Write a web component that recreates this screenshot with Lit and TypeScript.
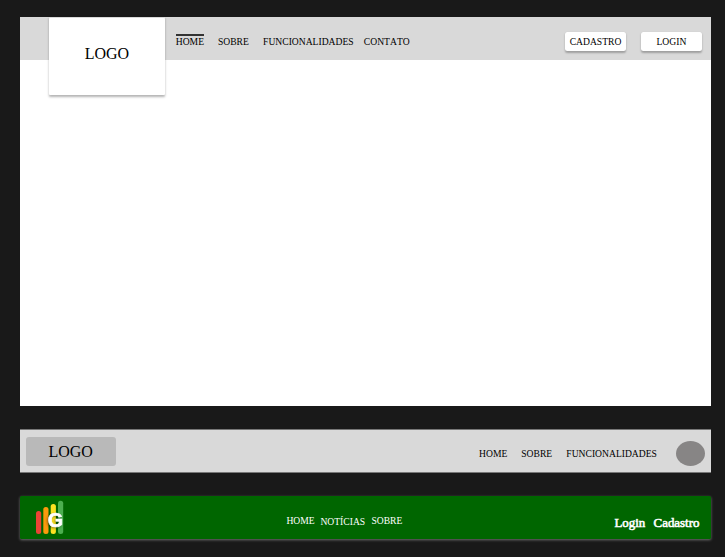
import { LitElement, html, css, svg } from "lit";
import { customElement } from "lit/decorators.js";

@customElement("brand-mark")
class BrandMark extends LitElement {
  static styles = css`
    :host { display: block; width: 28px; height: 36px; }
    svg { display: block; }
    .glyph { font: bold 21px "Liberation Sans", Arial, sans-serif; fill: #fff; stroke: #fff; stroke-width: 0.7px; filter: drop-shadow(-1px 1px 1px rgba(0, 0, 0, 0.4)); }
  `;
  render() {
    const bars = [
      { x: 0, y: 11, h: 23, c: "#ea4335" },
      { x: 7.3, y: 7, h: 27, c: "#fb9a0c" },
      { x: 14.7, y: 4, h: 30, c: "#fbe122" },
      { x: 22, y: 0.7, h: 33.3, c: "#4caf50" },
    ];
    return html`<svg width="28" height="36" viewBox="0 0 28 36">
      ${bars.map((b) => svg`<rect x=${b.x} y=${b.y} width="5.2" height=${b.h} rx="2.5" fill=${b.c}></rect>`)}
      <text class="glyph" x="11.8" y="26.7" textLength="15.3" lengthAdjust="spacingAndGlyphs">G</text>
    </svg>`;
  }
}

@customElement("app-root")
class AppRoot extends LitElement {
  static styles = css`
    :host {
      display: block; box-sizing: border-box; width: 725px; height: 557px; overflow: hidden;
      background: #191919; padding: 17px 13.6px 0 19.7px;
      font: 9.6px/12px "Liberation Serif", "Times New Roman", serif; color: #000;
    }
    .page { height: 389px; background: #fff; }
    .bar { display: flex; box-sizing: border-box; height: 43px; background: #d9d9d9; white-space: nowrap; }
    .brand {
      width: 115.3px; height: 78px; margin: 0 11.2px 0 29.6px; background: #fff; flex: none;
      box-shadow: 0 1.5px 2.5px rgba(0, 0, 0, 0.3), inset 0 1px #d9d9d9; border-radius: 1px;
      font-size: 16px; line-height: 73px; text-align: center;
    }
    .links { display: flex; padding-top: 19px; }
    .home { width: 42.2px; }
    .about { width: 45.1px; }
    .features { width: 100.8px; }
    .contact { font-kerning: none; }
    .active { display: inline-block; position: relative; }
    .active::before { content: ""; position: absolute; left: 0; right: 0; top: -2px; height: 2px; background: #333; }
    .actions { display: flex; gap: 14.5px; margin: 15px 9.3px 0 auto; }
    .button {
      width: 61.4px; height: 18.5px; border-radius: 2.5px; background: #fff; text-align: center; line-height: 20px;
      box-shadow: 0 1.5px 2px rgba(0, 0, 0, 0.27);
    }
    .compact { margin-top: 23px; border-top: 1px solid #777; border-bottom: 1px solid #777; height: 44px; }
    .tag {
      width: 90px; height: 29px; margin: 7px 0 0 6px; border-radius: 3px; background: #b9b9b9;
      font-size: 16px; line-height: 30px; text-align: center;
    }
    .compact .links { margin-left: auto; padding-top: 18px; }
    .avatar { width: 29px; height: 25px; border-radius: 50%; background: #878585; margin: 11px 6.3px 0 19.2px; }
    .green {
      margin-top: 23px; height: 43px; border-radius: 1.5px; background: #060; color: #fff;
      box-shadow: 0 1px 3px rgba(255, 255, 255, 0.38);
    }
    brand-mark { margin: 4px 0 0 16.3px; }
    .news { display: flex; margin-left: 222.4px; padding-top: 19px; }
    .news span:nth-child(1) { width: 34px; }
    .news span:nth-child(2) { width: 51px; margin-top: 0.5px; }
    .account {
      display: flex; gap: 8.3px; margin: 19px 12px 0 auto; font-size: 12.9px; line-height: 16px;
      -webkit-text-stroke: 0.6px #fff;
    }
  `;
  render() {
    return html`
      <section class="page">
        <header class="bar">
          <div class="brand">LOGO</div>
          <nav class="links">
            <span class="home"><span class="active">HOME</span></span>
            <span class="about">SOBRE</span>
            <span class="features">FUNCIONALIDADES</span>
            <span class="contact">CONTATO</span>
          </nav>
          <div class="actions">
            <div class="button">CADASTRO</div>
            <div class="button">LOGIN</div>
          </div>
        </header>
      </section>
      <header class="bar compact">
        <div class="tag">LOGO</div>
        <nav class="links">
          <span class="home">HOME</span>
          <span class="about">SOBRE</span>
          <span>FUNCIONALIDADES</span>
        </nav>
        <div class="avatar"></div>
      </header>
      <header class="bar green">
        <brand-mark></brand-mark>
        <nav class="news"><span>HOME</span><span>NOTÍCIAS</span><span>SOBRE</span></nav>
        <div class="account"><span>Login</span><span>Cadastro</span></div>
      </header>
    `;
  }
}
